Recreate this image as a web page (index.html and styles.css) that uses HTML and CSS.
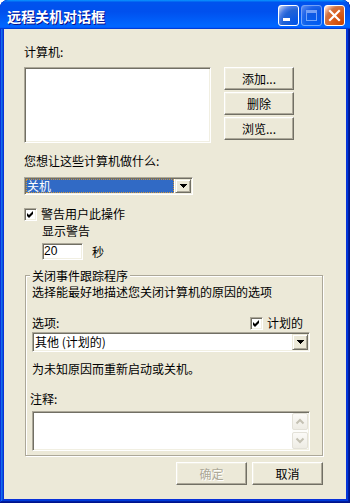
FILE: index.html
```html
<!DOCTYPE html>
<html lang="zh-CN">
<head>
<meta charset="utf-8">
<title>远程关机对话框</title>
<link rel="stylesheet" href="styles.css">
</head>
<body>
<div class="window">
  <div class="titlebar">
    <span class="title">远程关机对话框</span>
    <div class="controls">
      <span class="tb-btn tb-min"><svg width="19" height="19" viewBox="0 0 19 19"><rect x="4" y="12" width="7" height="3" fill="#fff"/></svg></span>
      <span class="tb-btn tb-max"><svg width="19" height="19" viewBox="0 0 19 19"><rect x="4.5" y="4.5" width="10" height="10" fill="none" stroke="#fff" stroke-width="1"/><rect x="4" y="4" width="11" height="3" fill="#fff"/></svg></span>
      <span class="tb-btn tb-close"><svg width="19" height="19" viewBox="0 0 19 19"><path d="M5 5 L14 14 M14 5 L5 14" stroke="#fff" stroke-width="2.2" stroke-linecap="square"/></svg></span>
    </div>
  </div>
  <div class="client">
    <div class="label">计算机:</div>
    <div class="computers">
      <div class="listbox sunken"></div>
      <div class="side-buttons">
        <button class="btn side">添加...</button>
        <button class="btn side">删除</button>
        <button class="btn side">浏览...</button>
      </div>
    </div>
    <div class="label l-action">您想让这些计算机做什么:</div>
    <div class="combo combo-action sunken">
      <div class="combo-field"><span class="selected">关机</span></div>
      <span class="combo-arrow"><svg width="7" height="4" viewBox="0 0 7 4"><path d="M0 0h7v1h-1v1h-1v1h-1v1h-1v-1h-1v-1h-1v-1h-1z" fill="#000"/></svg></span>
    </div>
    <div class="check c-warn">
      <span class="box"><svg width="13" height="13" viewBox="0 0 13 13"><path d="M3 5 L5 7 L9 3 L9 6 L5 10 L3 8 Z" fill="#000"/></svg></span>
      <span>警告用户此操作</span>
    </div>
    <div class="label l-show">显示警告</div>
    <div class="timer">
      <div class="edit sunken">20</div>
      <span class="unit">秒</span>
    </div>
    <fieldset class="group">
      <legend>关闭事件跟踪程序</legend>
      <div class="label desc">选择能最好地描述您关闭计算机的原因的选项</div>
      <div class="opt-row">
        <span class="label">选项:</span>
        <div class="check c-plan">
          <span class="box"><svg width="13" height="13" viewBox="0 0 13 13"><path d="M3 5 L5 7 L9 3 L9 6 L5 10 L3 8 Z" fill="#000"/></svg></span>
          <span>计划的</span>
        </div>
      </div>
      <div class="combo combo-reason sunken">
        <div class="combo-field"><span class="value">其他 (计划的)</span></div>
        <span class="combo-arrow"><svg width="7" height="4" viewBox="0 0 7 4"><path d="M0 0h7v1h-1v1h-1v1h-1v1h-1v-1h-1v-1h-1v-1h-1z" fill="#000"/></svg></span>
      </div>
      <div class="label desc2">为未知原因而重新启动或关机。</div>
      <div class="label l-note">注释:</div>
      <div class="memo sunken">
        <div class="vscroll">
          <span class="sb-btn"><svg width="14" height="15" viewBox="0 0 14 15"><polyline points="3.5,9.5 7,6 10.5,9.5" fill="none" stroke="#C4C1B3" stroke-width="2"/></svg></span>
          <span class="sb-btn"><svg width="14" height="15" viewBox="0 0 14 15"><polyline points="3.5,5.5 7,9 10.5,5.5" fill="none" stroke="#C4C1B3" stroke-width="2"/></svg></span>
        </div>
      </div>
    </fieldset>
    <div class="footer">
      <button class="btn disabled">确定</button>
      <button class="btn">取消</button>
    </div>
  </div>
</div>
</body>
</html>
```

FILE: styles.css
```css
* { box-sizing: border-box; }
html, body { margin: 0; padding: 0; }
body {
  width: 350px;
  height: 503px;
  overflow: hidden;
  background: #fff;
  font-family: "Noto Sans CJK SC", "Liberation Sans", sans-serif;
  font-size: 12px;
  color: #000;
}
.window {
  width: 350px;
  height: 503px;
  display: flex;
  flex-direction: column;
  background: #0831d9;
  border-radius: 8px 8px 0 0;
  overflow: hidden;
  box-shadow: inset -1px -1px #00138c, inset 1px 1px #0831d9, inset -2px -2px #001ea0, inset 2px 2px #166aee, inset -3px -3px #003bda, inset 3px 3px #0855dd;
}
.titlebar {
  flex: none;
  height: 29px;
  display: flex;
  align-items: center;
  padding: 2px 5px 0 7px;
  border-radius: 8px 8px 0 0;
  background: linear-gradient(180deg, #0997ff, #0053ee 8%, #0050ee 40%, #0066ff 88%, #0066ff 93%, #005bff 95%, #003dd7 96%, #003dd7);
}
.title {
  flex: 1;
  color: #fff;
  font-weight: bold;
  font-size: 14px;
  line-height: 16px;
  text-shadow: 1px 1px #0f1089;
  white-space: nowrap;
}
.controls { display: flex; gap: 2px; }
.tb-btn {
  width: 21px;
  height: 21px;
  border: 1px solid #fff;
  border-radius: 3px;
  display: flex;
}
.tb-min, .tb-max {
  background: radial-gradient(circle at 90% 90%, #0054e9 0%, #2263d5 55%, #4479e4 70%, #a3bbec 90%, #fff 100%);
}
.tb-max { opacity: 0.45; }
.tb-close {
  background: radial-gradient(circle at 90% 90%, #cc4600 0%, #dc6527 55%, #cd7546 70%, #ffccb2 90%, #fff 100%);
}

.client {
  flex: 1;
  margin: 0 4px 4px;
  background: #ECE9D8;
  padding: 16px 0 0 20px;
  display: flex;
  flex-direction: column;
  align-items: flex-start;
}
.label { line-height: 14px; height: 14px; white-space: nowrap; }
.sunken {
  background: #fff;
  border: 1px solid;
  border-color: #ACA899 #fff #fff #ACA899;
  box-shadow: inset 1px 1px #716F64, inset -1px -1px #F1EFE2;
}
.computers { display: flex; margin-top: 8px; }
.listbox { width: 187px; height: 76px; }
.side-buttons { margin-left: 13px; display: flex; flex-direction: column; gap: 2px; }
.btn {
  width: 71px;
  height: 23px;
  padding: 0;
  margin: 0;
  background: #ECE9D8;
  border: 1px solid;
  border-color: #fff #716F64 #716F64 #fff;
  box-shadow: inset -1px -1px #ACA899, inset 1px 1px #F1EFE2;
  font-family: inherit;
  font-size: 12px;
  line-height: 20px;
  text-align: center;
  color: #000;
}
.btn.side { width: 70px; }
.btn.disabled { color: #ACA899; text-shadow: 1px 1px #fff; }

.l-action { margin-top: 11px; }
.combo { display: flex; padding: 1px; }
.combo-action { width: 169px; height: 18px; margin-top: 9px; }
.combo-field { flex: 1; display: flex; min-width: 0; }
.selected {
  flex: 1;
  margin-right: 1px;
  background: #316AC5;
  color: #fff;
  border: 1px dotted #CE953A;
  line-height: 11px;
  padding-left: 0;
  white-space: nowrap;
}
.combo-arrow {
  flex: none;
  width: 16px;
  display: flex;
  align-items: center;
  justify-content: center;
  background: #ECE9D8;
  border: 1px solid;
  border-color: #ECE9D8 #716F64 #716F64 #ECE9D8;
  box-shadow: inset 1px 1px #fff, inset -1px -1px #ACA899;
}
.check {
  display: flex;
  align-items: center;
  gap: 4px;
  height: 14px;
  line-height: 14px;
  white-space: nowrap;
}
.c-warn { margin-top: 12px; }
.box {
  flex: none;
  width: 13px;
  height: 13px;
  background: #fff;
  border: 1px solid;
  border-color: #ACA899 #fff #fff #ACA899;
  box-shadow: inset 1px 1px #716F64, inset -1px -1px #F1EFE2;
}
.box svg { display: block; margin: -1px 0 0 -1px; }
.l-show { margin-top: 3px; margin-left: 18px; }
.timer { display: flex; align-items: center; margin-top: 5px; margin-left: 18px; }
.edit {
  width: 41px;
  height: 17px;
  padding-left: 1px;
  font-family: "Liberation Sans", sans-serif;
  font-size: 12px;
  line-height: 14px;
}
.unit { margin-left: 9px; line-height: 14px; }

.group {
  margin: 9px 0 0 1px;
  width: 298px;
  min-width: 0;
  padding: 0 6px 4px;
  border: 1px solid #ACA899;
  box-shadow: inset 1px 1px #fff, 1px 1px #fff;
  display: flex;
  flex-direction: column;
  align-items: flex-start;
}
.group legend {
  margin-left: -2px;
  padding: 0 2px;
  line-height: 13px;
  background: #ECE9D8;
  white-space: nowrap;
}
.desc { margin-top: 3px; }
.opt-row {
  width: 100%;
  height: 14px;
  margin-top: 17px;
  display: flex;
  justify-content: space-between;
  align-items: center;
}
.c-plan { margin-right: 13px; }
.combo-reason { width: 278px; height: 20px; margin-top: 2px; }
.value { padding-left: 1px; line-height: 16px; white-space: nowrap; }
.desc2 { margin-top: 10px; }
.l-note { margin-top: 16px; margin-left: -2px; }
.memo {
  width: 278px;
  height: 40px;
  margin-top: 5px;
  padding: 1px;
  display: flex;
  justify-content: flex-end;
}
.vscroll {
  width: 16px;
  height: 36px;
  display: flex;
  flex-direction: column;
  justify-content: space-between;
  background: #FDFDFB;
}
.sb-btn {
  height: 17px;
  border: 1px solid #E3E1D8;
  border-radius: 2px;
  background: linear-gradient(180deg, #FBFAF7, #EEECE4);
  display: flex;
  justify-content: center;
  align-items: center;
}
.footer {
  display: flex;
  gap: 5px;
  margin: 6px 0 0 152px;
}
```
